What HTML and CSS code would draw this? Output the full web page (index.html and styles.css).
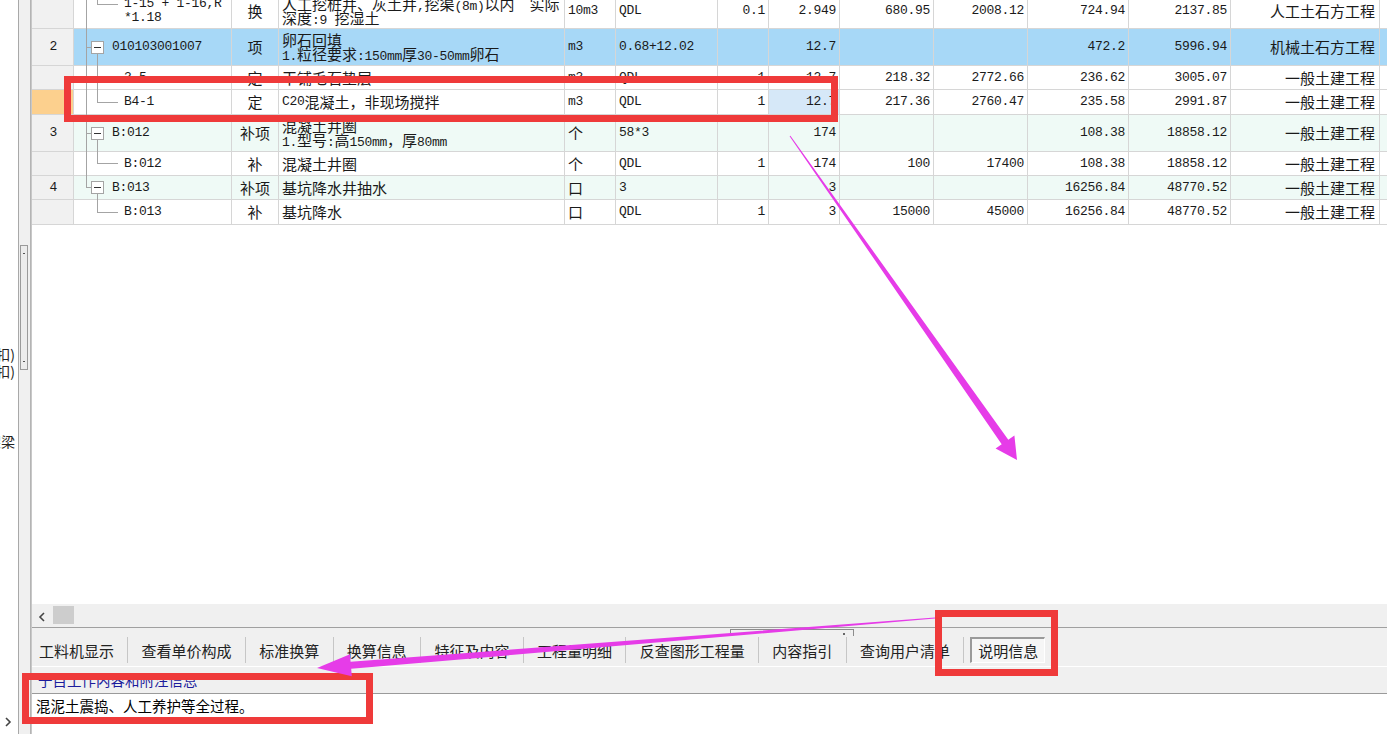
FILE: index.html
```html
<!DOCTYPE html>
<html lang="zh-CN">
<head>
<meta charset="utf-8">
<title>说明信息</title>
<link rel="stylesheet" href="styles.css">
</head>
<body>
<div class="app">
  <aside class="left-pane">
    <div class="lp-item lp-first"><span>钢筋(扣)</span></div>
    <div class="lp-item"><span>钢筋(扣)</span></div>
    <div class="lp-item lp-gap"><span>框架梁</span></div>
    <div class="lp-expand">
      <svg width="8" height="10" viewBox="0 0 8 10"><polyline points="2,1 6,5 2,9" fill="none" stroke="#444" stroke-width="1.6"/></svg>
    </div>
  </aside>
  <div class="splitter"><div class="vthumb"></div></div>
  <main class="main">
    <div class="grid-area">
      <div class="grid">
        <div class="row">
          <div class="n"></div>
          <div class="k lv2 two"><span>1-15 + 1-16,R</span><span>*1.18</span></div>
          <div class="y">换</div>
          <div class="m two"><span>人工挖桩井、灰土井<span class="lat">,</span>挖渠<span class="lat">(8m)</span>以内<span class="lat">&nbsp;&nbsp;</span>实际</span><span>深度<span class="lat">:9 </span>挖湿土</span></div>
          <div class="u lat">10m3</div>
          <div class="e">QDL</div>
          <div class="r">0.1</div>
          <div class="r">2.949</div>
          <div class="r">680.95</div>
          <div class="r">2008.12</div>
          <div class="r">724.94</div>
          <div class="r">2137.85</div>
          <div class="p">人工土石方工程</div>
          <div class="x"></div>
        </div>
        <div class="row blue">
          <div class="n">2</div>
          <div class="k lv1">010103001007</div>
          <div class="y">项</div>
          <div class="m two"><span>卵石回填</span><span><span class="lat">1.</span>粒径要求<span class="lat">:150mm</span>厚<span class="lat">30-50mm</span>卵石</span></div>
          <div class="u lat">m3</div>
          <div class="e">0.68+12.02</div>
          <div class="r"></div>
          <div class="r">12.7</div>
          <div class="r"></div>
          <div class="r"></div>
          <div class="r">472.2</div>
          <div class="r">5996.94</div>
          <div class="p">机械土石方工程</div>
          <div class="x"></div>
        </div>
        <div class="row">
          <div class="n"></div>
          <div class="k lv2">3-5</div>
          <div class="y">定</div>
          <div class="m">干铺毛石垫层</div>
          <div class="u lat">m3</div>
          <div class="e">QDL</div>
          <div class="r">1</div>
          <div class="r">12.7</div>
          <div class="r">218.32</div>
          <div class="r">2772.66</div>
          <div class="r">236.62</div>
          <div class="r">3005.07</div>
          <div class="p">一般土建工程</div>
          <div class="x"></div>
        </div>
        <div class="row">
          <div class="n cur"></div>
          <div class="k lv2">B4-1</div>
          <div class="y">定</div>
          <div class="m"><span class="lat">C20</span>混凝土，非现场搅拌</div>
          <div class="u lat">m3</div>
          <div class="e">QDL</div>
          <div class="r">1</div>
          <div class="r sel">12.7</div>
          <div class="r">217.36</div>
          <div class="r">2760.47</div>
          <div class="r">235.58</div>
          <div class="r">2991.87</div>
          <div class="p">一般土建工程</div>
          <div class="x"></div>
        </div>
        <div class="row green">
          <div class="n">3</div>
          <div class="k lv1">B:012</div>
          <div class="y">补项</div>
          <div class="m two"><span>混凝土井圈</span><span><span class="lat">1.</span>型号<span class="lat">:</span>高<span class="lat">150mm</span>，厚<span class="lat">80mm</span></span></div>
          <div class="u">个</div>
          <div class="e">58*3</div>
          <div class="r"></div>
          <div class="r">174</div>
          <div class="r"></div>
          <div class="r"></div>
          <div class="r">108.38</div>
          <div class="r">18858.12</div>
          <div class="p">一般土建工程</div>
          <div class="x"></div>
        </div>
        <div class="row">
          <div class="n"></div>
          <div class="k lv2">B:012</div>
          <div class="y">补</div>
          <div class="m">混凝土井圈</div>
          <div class="u">个</div>
          <div class="e">QDL</div>
          <div class="r">1</div>
          <div class="r">174</div>
          <div class="r">100</div>
          <div class="r">17400</div>
          <div class="r">108.38</div>
          <div class="r">18858.12</div>
          <div class="p">一般土建工程</div>
          <div class="x"></div>
        </div>
        <div class="row green">
          <div class="n">4</div>
          <div class="k lv1">B:013</div>
          <div class="y">补项</div>
          <div class="m">基坑降水井抽水</div>
          <div class="u">口</div>
          <div class="e">3</div>
          <div class="r"></div>
          <div class="r">3</div>
          <div class="r"></div>
          <div class="r"></div>
          <div class="r">16256.84</div>
          <div class="r">48770.52</div>
          <div class="p">一般土建工程</div>
          <div class="x"></div>
        </div>
        <div class="row">
          <div class="n"></div>
          <div class="k lv2">B:013</div>
          <div class="y">补</div>
          <div class="m">基坑降水</div>
          <div class="u">口</div>
          <div class="e">QDL</div>
          <div class="r">1</div>
          <div class="r">3</div>
          <div class="r">15000</div>
          <div class="r">45000</div>
          <div class="r">16256.84</div>
          <div class="r">48770.52</div>
          <div class="p">一般土建工程</div>
          <div class="x"></div>
        </div>
      </div>
      <svg class="tree" width="120" height="230" viewBox="0 0 120 230">
        <g fill="none" stroke="#a4a4a4" stroke-width="1" shape-rendering="crispEdges">
          <path d="M54.5 0 V188 M54.5 47.5 H59 M54.5 133.5 H59 M54.5 187.5 H59"/>
          <path d="M65.5 0 V4.5 H86 M65.5 54 V102.5 H86 M65.5 77.5 H86 M65.5 140 V163.5 H86 M65.5 194 V212.5 H86"/>
          <rect x="59.5" y="41.5" width="12" height="12" fill="#fff"/>
          <rect x="59.5" y="127.5" width="12" height="12" fill="#fff"/>
          <rect x="59.5" y="181.5" width="12" height="12" fill="#fff"/>
        </g>
        <g stroke="#333" stroke-width="1" shape-rendering="crispEdges">
          <path d="M62 47.5 H69 M62 133.5 H69 M62 187.5 H69"/>
        </g>
      </svg>
    </div>
    <div class="hscroll">
      <svg class="hs-arrow" width="8" height="10" viewBox="0 0 8 10"><polyline points="6,1 2,5 6,9" fill="none" stroke="#444" stroke-width="1.6"/></svg>
      <div class="hs-thumb"></div>
    </div>
    <div class="tabs">
      <div class="tab">工料机显示</div>
      <div class="tab">查看单价构成</div>
      <div class="tab">标准换算</div>
      <div class="tab">换算信息</div>
      <div class="tab">特征及内容</div>
      <div class="tab">工程量明细</div>
      <div class="tab">反查图形工程量</div>
      <div class="tab">内容指引</div>
      <div class="tab">查询用户清单</div>
      <div class="tab active"><span>说明信息</span></div>
      <div class="tab end"></div>
      <div class="split-handle"></div>
    </div>
    <div class="label-bar">子目工作内容和附注信息</div>
    <div class="desc">混泥土震捣、人工养护等全过程。</div>
  </main>
</div>
<svg class="annot" width="1387" height="734" viewBox="0 0 1387 734">
  <g fill="none" stroke="#ef3a3a" stroke-width="7">
    <rect x="67.5" y="79.5" width="767" height="39"/>
    <rect x="938.5" y="613.5" width="116" height="59"/>
    <rect x="25.5" y="676.5" width="344" height="44"/>
  </g>
  <g fill="#e63ce8">
    <polygon points="789.6,136.3 790.4,135.7 1008.3,439.7 1014.4,435.4 1017,460 995.6,448.6 1001.7,444.3"/>
    <polygon points="934.9,617.5 350.6,661.8 350,654.3 317,668 351.8,676.3 351.2,668.8 935.1,618.6"/>
  </g>
</svg>
</body>
</html>
```

FILE: styles.css
```css
* { box-sizing: border-box; }
html, body { margin: 0; padding: 0; }
body {
  width: 1387px;
  height: 734px;
  overflow: hidden;
  position: relative;
  background: #fff;
  color: #111;
  font-family: "Noto Sans CJK SC", sans-serif;
}
.app { display: flex; height: 734px; }

/* left clipped pane */
.left-pane {
  width: 18px;
  flex: none;
  overflow: hidden;
  display: flex;
  flex-direction: column;
  font-size: 14px;
  color: #222;
}
.lp-item {
  display: flex;
  justify-content: flex-end;
  white-space: nowrap;
  height: 17px;
  line-height: 17px;
  padding-right: 3px;
}
.lp-first { margin-top: 346px; }
.lp-gap { margin-top: 53px; }
.lp-expand {
  margin-top: auto;
  margin-bottom: 7px;
  padding-left: 4px;
  height: 10px;
  display: flex;
}

.splitter {
  width: 13px;
  flex: none;
  background: #f0f0f0;
  border-left: 1px solid #a8a8a8;
  border-right: 1px solid #b4b4b4;
}
.vthumb {
  margin: 245px 0 0 1px;
  width: 8px;
  height: 125px;
  border: 1px solid #9a9a9a;
  background: #ececec;
  position: relative;
}
.vthumb::before, .vthumb::after {
  content: "";
  position: absolute;
  left: 2px;
  width: 2px;
  height: 1px;
  background: #555;
}
.vthumb::before { top: 7px; }
.vthumb::after { bottom: 7px; }

/* main panel */
.main {
  flex: 1;
  min-width: 0;
  display: flex;
  flex-direction: column;
  border-left: 1px solid #c8c8c8;
}
.grid-area {
  height: 604px;
  flex: none;
  position: relative;
  overflow: hidden;
  background: #fff;
}
.grid {
  display: grid;
  grid-template-columns: 42px 158px 47px 286px 51px 102px 51px 71px 94px 94px 101px 102px 149px 1fr;
  grid-template-rows: 35px 37px 24px 25px 37px 24px 24px 25px;
  margin-top: -6px;
}
.row { display: contents; }
.row > div {
  border-right: 1px solid #d6d6d6;
  border-bottom: 1px solid #d6d6d6;
  display: flex;
  align-items: center;
  overflow: hidden;
  white-space: nowrap;
  font-size: 15px;
  line-height: 14px;
  padding: 0 3px;
  color: #1a1a1a;
}
.row.blue > div { background: #a7d8f7; }
.row.green > div { background: #effaf6; }
.row > .n {
  background: #f1f1f1;
  justify-content: center;
  font-family: "Liberation Mono", monospace;
  font-size: 13px;
  padding: 0 0 0 2px;
}
.row.blue > .n, .row.green > .n { background: #f1f1f1; }
.row > .n.cur { background: #fcd08e; }

.lat,
.row > .k,
.row > .e,
.row > .r,
.row > .u.lat {
  font-family: "Liberation Mono", "Noto Sans CJK SC", monospace;
  font-size: 13px;
  letter-spacing: -0.3px;
}
.two { flex-direction: column; justify-content: center; align-items: flex-start !important; }
.two > span { display: block; height: 14px; line-height: 14px; }
.row > .k { padding-left: 38px; }
.row > .k.lv2 { padding-left: 50px; }
.row > .y { justify-content: center; padding: 0; }
.row > .m { padding-left: 3px; }
.row > .r { justify-content: flex-end; padding-right: 3px; }
.row > .r.sel { background: #d6e8f8; }
.row > .p { justify-content: flex-end; padding-right: 4px; }
.row > .x { border-right: none; }

.tree { position: absolute; left: 0; top: 0; }

/* horizontal scrollbar */
.hscroll {
  height: 24px;
  flex: none;
  background: #f0f0f0;
  border-bottom: 1px solid #a0a0a0;
  display: flex;
  align-items: flex-start;
  padding: 2px 0 0 6px;
}
.hs-arrow { margin-top: 6px; flex: none; }
.hs-thumb {
  margin-left: 7px;
  width: 21px;
  height: 18px;
  background: #cdcdcd;
}

/* tab strip */
.tabs {
  height: 39px;
  flex: none;
  background: #f0f0f0;
  border-bottom: 1px solid #ffffff;
  display: flex;
  align-items: flex-start;
  padding-top: 9px;
  position: relative;
}
.tab {
  height: 26px;
  display: flex;
  align-items: center;
  padding: 0 13.3px;
  border-left: 1px solid #c6c6c6;
  font-size: 15px;
  color: #222;
  white-space: nowrap;
}
.tab:first-child { border-left: none; padding-left: 7px; }
.tab.active { padding: 0 6px; }
.tab.active span {
  height: 26px;
  display: flex;
  align-items: center;
  padding: 0 6px;
  border-top: 2px solid #9a9a9a;
  border-left: 2px solid #9a9a9a;
  border-right: 1px solid #ffffff;
  border-bottom: 1px solid #ffffff;
  background: #f6f6f6;
}
.tab.end { padding: 0; width: 1px; }
.split-handle {
  position: absolute;
  left: 698px;
  top: 1px;
  width: 124px;
  height: 7px;
  border: 1px solid #8c8c8c;
  border-bottom: none;
}
.split-handle::after {
  content: "";
  position: absolute;
  right: 8px;
  top: 3px;
  width: 2px;
  height: 2px;
  background: #666;
}

.label-bar {
  height: 27px;
  flex: none;
  background: #f0f0f0;
  border-bottom: 1px solid #9a9a9a;
  color: #1c1c9c;
  font-size: 14.5px;
  line-height: 26px;
  padding-left: 6px;
  white-space: nowrap;
}
.desc {
  flex: 1;
  padding: 3px 4px;
  font-size: 14.5px;
  line-height: 18px;
  color: #000;
  white-space: nowrap;
}

.annot {
  position: absolute;
  left: 0;
  top: 0;
  pointer-events: none;
}
```
